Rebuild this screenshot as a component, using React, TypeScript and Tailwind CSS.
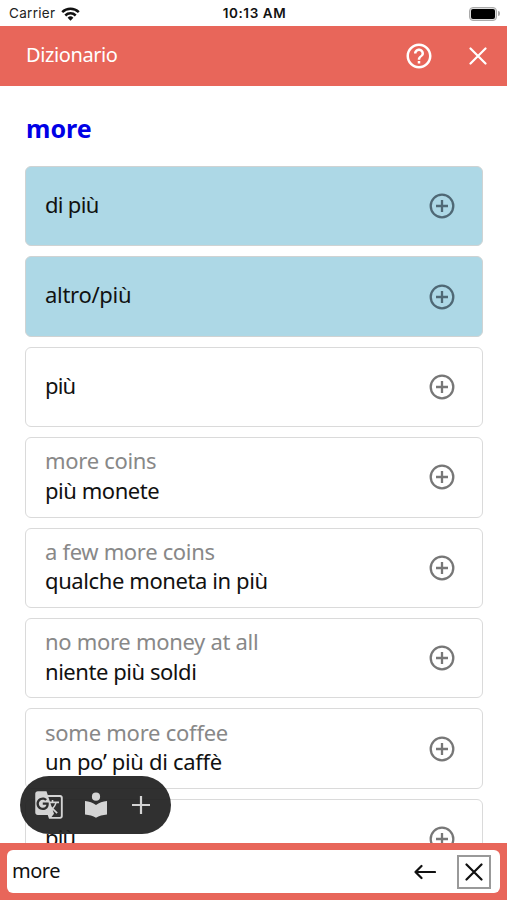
import { MdGTranslate, MdHelpOutline } from 'react-icons/md'

type Entry = {
  id: number
  source?: string
  sourceTracking?: string
  target: string
  targetTracking: string
  highlighted?: boolean
}

const entries: Entry[] = [
  { id: 1, target: 'di più', targetTracking: 'tracking-[-0.7px]', highlighted: true },
  { id: 2, target: 'altro/più', targetTracking: 'tracking-[-0.3px]', highlighted: true },
  { id: 3, target: 'più', targetTracking: 'tracking-[-0.9px]' },
  { id: 4, source: 'more coins', sourceTracking: 'tracking-[-0.3px]', target: 'più monete', targetTracking: 'tracking-[-0.45px]' },
  { id: 5, source: 'a few more coins', sourceTracking: 'tracking-[-0.33px]', target: 'qualche moneta in più', targetTracking: 'tracking-[-0.4px]' },
  { id: 6, source: 'no more money at all', sourceTracking: 'tracking-[-0.3px]', target: 'niente più soldi', targetTracking: 'tracking-[-0.45px]' },
  { id: 7, source: 'some more coffee', sourceTracking: 'tracking-[-0.25px]', target: 'un po’ più di caffè', targetTracking: 'tracking-[-0.33px]' },
  { id: 8, target: 'più', targetTracking: 'tracking-[-0.9px]' },
]

function CloseIcon({ className }: { className: string }) {
  return (
    <svg className={className} viewBox="0 0 18 18" fill="none" stroke="currentColor" strokeWidth="2.2" strokeLinecap="round">
      <path d="M1.5 1.5 16.5 16.5M16.5 1.5 1.5 16.5" />
    </svg>
  )
}

function AddCircleIcon({ className }: { className: string }) {
  return (
    <svg className={className} viewBox="0 0 26 26" fill="none" stroke="currentColor" strokeWidth="2.3">
      <circle cx="13" cy="13" r="11.3" />
      <path d="M13 7v12M7 13h12" />
    </svg>
  )
}

function StatusBar() {
  return (
    <div className="grid h-[26px] shrink-0 grid-cols-3 items-center pt-px pr-[7px] pl-[9px] font-['Inter',sans-serif] text-[13.5px] text-[#222]">
      <div className="flex items-center gap-[6px]">
        <span className="tracking-[0.3px]">Carrier</span>
        <svg className="h-[14px] w-[19px]" viewBox="0 0 19 14" fill="none" stroke="#111" strokeWidth="2.5">
          <path d="M1.2 5.2a12 12 0 0 1 16.6 0" />
          <path d="M4.3 8.5a7.4 7.4 0 0 1 10.4 0" />
          <path d="M9.5 13.7 6.6 10.8a4.1 4.1 0 0 1 5.8 0Z" fill="#111" stroke="none" />
        </svg>
      </div>
      <span className="text-center font-semibold tracking-[0.6px] whitespace-nowrap text-[#111]">10:13 AM</span>
      <div className="flex items-center justify-end gap-px">
        <div className="h-[14px] w-[28px] rounded-[4px] border border-[#aaa] bg-[#ddd] p-px">
          <div className="h-full rounded-[2px] bg-black" />
        </div>
        <div className="h-[5px] w-[2px] rounded-r-full bg-[#aaa]" />
      </div>
    </div>
  )
}

function EntryCard({ entry }: { entry: Entry }) {
  return (
    <article className={`flex h-[80.4px] shrink-0 items-center justify-between rounded-[6px] border-[1.5px] pr-[27px] pl-[19px] ${entry.highlighted ? 'border-[#cfd3d3] bg-[#add8e6]' : 'border-[#dadada] bg-white'}`}>
      <div className="pb-[3px] text-[22px] leading-[29.5px] whitespace-nowrap">
        {entry.source && <p className={`text-[#888] ${entry.sourceTracking}`}>{entry.source}</p>}
        <p className={`text-[#111] ${entry.targetTracking}`}>{entry.target}</p>
      </div>
      <AddCircleIcon className={`size-[26px] ${entry.highlighted ? 'text-[#4f6875]' : 'text-[#777]'}`} />
    </article>
  )
}

export default function App() {
  return (
    <div className="relative flex h-[900px] w-[507px] flex-col overflow-hidden bg-white font-['Noto_Sans',sans-serif]">
      <StatusBar />
      <header className="flex h-[60px] shrink-0 items-center justify-between bg-[#e8665a] pr-[20px] pl-[26px] text-white">
        <h1 className="pb-[2px] text-[20px] leading-[30px] tracking-[-0.4px]">Dizionario</h1>
        <div className="flex items-center gap-[35px]">
          <MdHelpOutline className="size-[30px]" />
          <CloseIcon className="size-[18px]" />
        </div>
      </header>

      <main className="flex min-h-0 flex-1 flex-col overflow-hidden pr-[24px] pl-[25px]">
        <h2 className="flex h-[80px] shrink-0 items-center pt-[3px] pl-px text-[25px] leading-[30px] font-bold text-[#0000e6]">more</h2>
        <div className="flex flex-col gap-[10px]">
          {entries.map((entry) => <EntryCard entry={entry} key={entry.id} />)}
        </div>
      </main>

      <div className="absolute top-[775.5px] left-[19.5px] flex h-[58px] w-[151px] items-center rounded-full bg-[#1e1e1e]/92 pl-[14px] text-[#d4d4d4]">
        <MdGTranslate className="size-[30px]" />
        <svg className="ml-[20px] h-[26px] w-[24px]" viewBox="0 0 24 26" fill="currentColor">
          <circle cx="12" cy="4.7" r="4.1" />
          <path d="M12 13C9 10.7 5.2 9.3 1 9v13.4c4.2.4 8 1.3 11 3.4 3-2.1 6.8-3 11-3.4V9c-4.2.3-8 1.7-11 4Z" />
        </svg>
        <svg className="ml-[24px] size-[18px]" viewBox="0 0 18 18" fill="none" stroke="currentColor" strokeWidth="2.2">
          <path d="M9 0v18M0 9h18" />
        </svg>
      </div>

      <footer className="flex h-[57px] shrink-0 bg-[#e8665a] px-[7px] pt-[7px] pb-[7px]">
        <div className="flex flex-1 items-center rounded-[6px] bg-white pr-[9px] pl-[5px] text-[#111]">
          <span className="flex-1 pb-[2px] text-[20px] leading-[30px] tracking-[-0.5px]">more</span>
          <svg className="mr-[21px] h-[16px] w-[22px]" viewBox="0 0 22 16" fill="none" stroke="currentColor" strokeWidth="2.2" strokeLinecap="round" strokeLinejoin="round">
            <path d="M21 8H1.5M7.5 2l-6 6 6 6" />
          </svg>
          <button className="flex h-[34px] w-[34px] items-center justify-center border-2 border-[#999]">
            <CloseIcon className="size-[18px]" />
          </button>
        </div>
      </footer>
    </div>
  )
}
